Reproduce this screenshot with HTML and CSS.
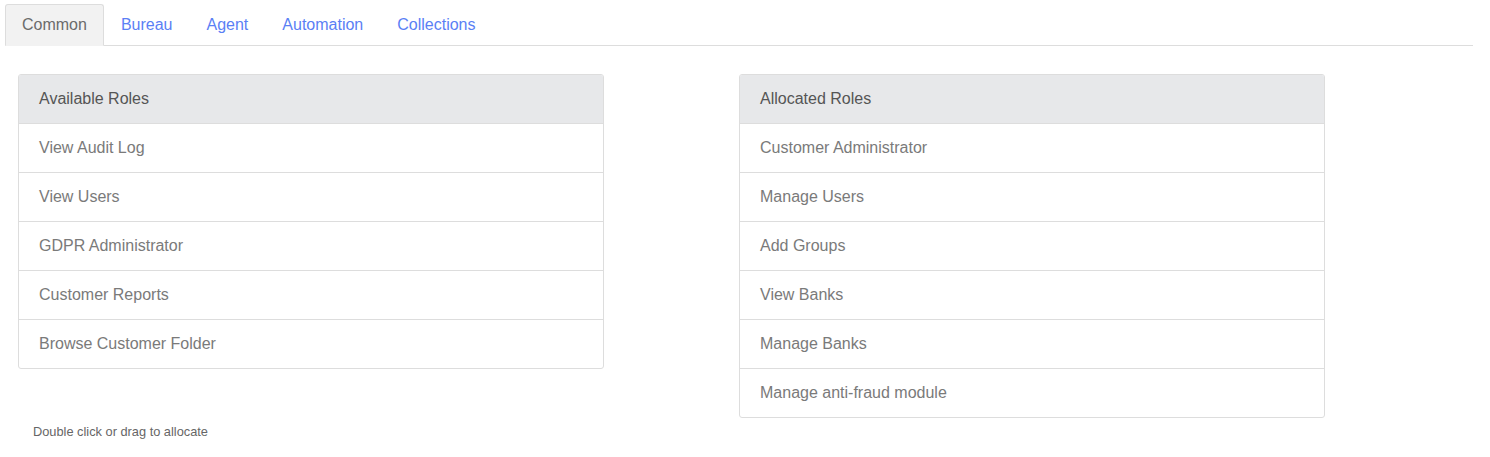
FILE: index.html
```html
<!DOCTYPE html>
<html>
<head>
<meta charset="utf-8">
<link rel="stylesheet" href="styles.css">
</head>
<body>
<div class="page">
  <ul class="tabs">
    <li class="tab active"><a>Common</a></li>
    <li class="tab"><a>Bureau</a></li>
    <li class="tab"><a>Agent</a></li>
    <li class="tab"><a>Automation</a></li>
    <li class="tab"><a>Collections</a></li>
  </ul>
  <div class="content">
    <div class="column">
      <div class="panel">
        <div class="panel-heading">Available Roles</div>
        <div class="item">View Audit Log</div>
        <div class="item">View Users</div>
        <div class="item">GDPR Administrator</div>
        <div class="item">Customer Reports</div>
        <div class="item">Browse Customer Folder</div>
      </div>
      <p class="hint">Double click or drag to allocate</p>
    </div>
    <div class="column">
      <div class="panel">
        <div class="panel-heading">Allocated Roles</div>
        <div class="item">Customer Administrator</div>
        <div class="item">Manage Users</div>
        <div class="item">Add Groups</div>
        <div class="item">View Banks</div>
        <div class="item">Manage Banks</div>
        <div class="item">Manage anti-fraud module</div>
      </div>
    </div>
  </div>
</div>
</body>
</html>
```

FILE: styles.css
```css
html, body {
  margin: 0;
  padding: 0;
  background: #ffffff;
}
body {
  font-family: "Liberation Sans", Arial, sans-serif;
  font-size: 16px;
  color: #777777;
}
.page {
  padding: 4px 0 0 5px;
  width: 1468px;
}
.tabs {
  list-style: none;
  margin: 0;
  padding: 0;
  display: flex;
  border-bottom: 1px solid #dddddd;
}
.tab {
  margin-bottom: -1px;
}
.tab a {
  display: block;
  padding: 10px 16px;
  line-height: 20px;
  font-size: 16px;
  color: #5b7ff5;
  border: 1px solid transparent;
  border-radius: 3px 3px 0 0;
}
.tab.active a {
  color: #6b6b6b;
  background: #f2f2f2;
  border-color: #dddddd;
  border-bottom-color: #f2f2f2;
}
.content {
  display: flex;
  gap: 135px;
  padding: 28px 0 0 13px;
}
.column {
  width: 586px;
}
.panel {
  border: 1px solid #dddddd;
  border-radius: 3px;
  overflow: hidden;
}
.panel-heading {
  background: #e7e8ea;
  color: #555555;
  padding: 12px 20px;
  line-height: 24px;
}
.item {
  border-top: 1px solid #dddddd;
  padding: 12px 20px;
  line-height: 24px;
  color: #7a7a7a;
}
.hint {
  margin: 55px 0 0 15px;
  font-size: 12.8px;
  line-height: 16px;
  color: #666666;
}
```
